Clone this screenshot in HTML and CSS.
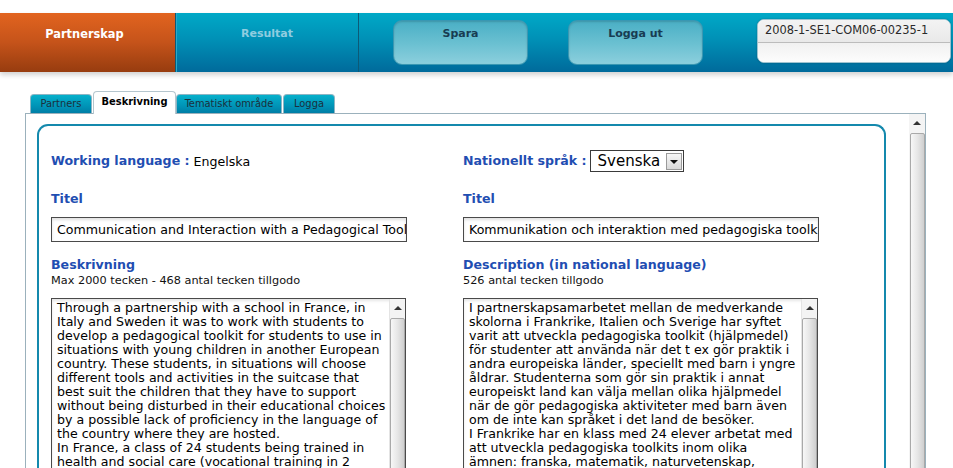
FILE: index.html
```html
<!DOCTYPE html>
<html lang="sv">
<head>
<meta charset="utf-8">
<title>Partnerskap - Beskrivning</title>
<link rel="stylesheet" href="styles.css">
</head>
<body>
<header class="topbar">
  <nav class="mainnav">
    <a class="nav-item nav-active">Partnerskap</a>
    <a class="nav-item nav-plain">Resultat</a>
  </nav>
  <div class="actions">
    <a class="pill">Spara</a>
    <a class="pill">Logga ut</a>
  </div>
  <div class="project-id">
    <div class="id-top">2008-1-SE1-COM06-00235-1</div>
    <div class="id-bottom"></div>
  </div>
</header>

<div class="tabs">
  <span class="tab tab-partners">Partners</span>
  <span class="tab tab-active">Beskrivning</span>
  <span class="tab tab-tema">Tematiskt område</span>
  <span class="tab tab-logga">Logga</span>
</div>

<section class="panel">
  <div class="panel-body">
    <div class="card">
      <div class="grid">
        <div class="field-row">
          <span class="label">Working language :</span>
          <span class="value">Engelska</span>
        </div>
        <div class="field-row">
          <span class="label">Nationellt språk :</span>
          <span class="select">
            <span class="select-text">Svenska</span>
            <span class="select-btn"><span class="tri-down"></span></span>
          </span>
        </div>

        <div class="field">
          <div class="label heading">Titel</div>
          <div class="input">Communication and Interaction with a Pedagogical Tool</div>
        </div>
        <div class="field">
          <div class="label heading">Titel</div>
          <div class="input">Kommunikation och interaktion med pedagogiska toolkit</div>
        </div>

        <div class="field">
          <div class="label heading sub">Beskrivning</div>
          <div class="hint">Max 2000 tecken - 468 antal tecken tillgodo</div>
          <div class="textarea">
            <div class="ta-text">Through a partnership with a school in France, in<br>Italy and Sweden it was to work with students to<br>develop a pedagogical toolkit for students to use in<br>situations with young children in another European<br>country. These students, in situations will choose<br>different tools and activities in the suitcase that<br>best suit the children that they have to support<br>without being disturbed in their educational choices<br>by a possible lack of proficiency in the language of<br>the country where they are hosted.<br>In France, a class of 24 students being trained in<br>health and social care (vocational training in 2<br>years) worked on developing pedagogical toolkits</div>
            <div class="vscroll"><span class="sb-up"><span class="tri-up"></span></span><span class="sb-thumb"></span></div>
          </div>
        </div>
        <div class="field">
          <div class="label heading sub">Description (in national language)</div>
          <div class="hint">526 antal tecken tillgodo</div>
          <div class="textarea">
            <div class="ta-text">I partnerskapsamarbetet mellan de medverkande<br>skolorna i Frankrike, Italien och Sverige har syftet<br>varit att utveckla pedagogiska toolkit (hjälpmedel)<br>för studenter att använda när det t ex gör praktik i<br>andra europeiska länder, speciellt med barn i yngre<br>åldrar. Studenterna som gör sin praktik i annat<br>europeiskt land kan välja mellan olika hjälpmedel<br>när de gör pedagogiska aktiviteter med barn även<br>om de inte kan språket i det land de besöker.<br>I Frankrike har en klass med 24 elever arbetat med<br>att utveckla pedagogiska toolkits inom olika<br>ämnen: franska, matematik, naturvetenskap,<br>historia och geografi.</div>
            <div class="vscroll"><span class="sb-up"><span class="tri-up"></span></span><span class="sb-thumb"></span></div>
          </div>
        </div>
      </div>
    </div>
  </div>
  <div class="vscroll page-scroll"><span class="sb-up"><span class="tri-up"></span></span><span class="sb-thumb"></span></div>
</section>
</body>
</html>
```
FILE: styles.css
```css
* { box-sizing: border-box; }
html, body { margin: 0; padding: 0; background: #fff; overflow: hidden; }
body {
  font-family: "DejaVu Sans", Verdana, sans-serif;
  font-size: 12.6px;
  color: #000;
  height: 468px;
}

/* ---------- top bar ---------- */
.topbar {
  margin-top: 13px;
  height: 59px;
  display: flex;
  background: linear-gradient(#00a9c7, #0090b6 45%, #006a9b);
  box-shadow: 0 3px 5px rgba(0, 0, 0, 0.18);
  position: relative;
}
.mainnav { display: flex; }
.nav-item {
  display: block;
  height: 59px;
  padding-top: 14px;
  text-align: center;
  font-size: 11px;
  font-weight: bold;
  line-height: 14px;
  border-right: 1px solid #0c5a77;
}
.nav-active {
  width: 176px;
  padding-right: 6px;
  font-size: 11.4px;
  color: #fff;
  background: linear-gradient(#e2641f, #c5531a 50%, #973c0f);
}
.nav-plain {
  width: 183px;
  color: #8fcde0;
  box-shadow: inset 1px 0 0 #2aa9c8;
}
.actions {
  display: flex;
  gap: 40px;
  margin-left: 34px;
  padding-top: 7px;
}
.pill {
  display: block;
  width: 135px;
  height: 45px;
  border: 1px solid #3a97b2;
  border-radius: 9px;
  background: linear-gradient(#4aafc5, #6cc1d2 55%, #8ccfdd);
  box-shadow: inset 0 1px 2px rgba(0, 0, 0, 0.15);
  font-size: 11px;
  font-weight: bold;
  line-height: 14px;
  color: #183c52;
  padding-top: 6px;
  text-align: center;
}
.project-id {
  margin: 6px 0 0 54px;
  width: 194px;
  height: 44px;
  border-radius: 7px;
  border: 1px solid #9ec3d0;
  background: #fff;
  overflow: hidden;
  box-shadow: 0 0 2px rgba(0, 0, 0, 0.25);
}
.id-top {
  height: 23px;
  padding: 2px 0 0 7px;
  font-size: 11.4px;
  line-height: 16px;
  color: #2a2a2a;
  background: linear-gradient(#f3f3f3, #e9e9e9);
  border-bottom: 1px solid #bcbcbc;
}
.id-bottom {
  height: 20px;
  background: linear-gradient(#f1f1f1, #fdfdfd);
}

/* ---------- tabs ---------- */
.tabs {
  display: flex;
  align-items: flex-end;
  margin: 19px 0 0 30px;
  height: 22px;
  position: relative;
  z-index: 1;
}
.tab {
  height: 19px;
  font-family: "DejaVu Sans Condensed", "DejaVu Sans", sans-serif;
  font-size: 11px;
  line-height: 18px;
  color: #1b2f3c;
  text-align: center;
  white-space: nowrap;
  background: linear-gradient(#06b0cb, #0094b7 60%, #007ea6);
  border: 1px solid #8cb5c4;
  border-bottom: none;
  border-radius: 4px 4px 0 0;
}
.tab-partners { width: 62px; margin-right: 1px; }
.tab-tema { width: 106px; margin-right: 1px; }
.tab-logga { width: 52px; }
.tab-active {
  width: 83px;
  height: 23px;
  margin-bottom: -1px;
  background: #fff;
  color: #000;
  font-weight: bold;
  line-height: 19px;
  border-color: #b5c6ce;
}

/* ---------- panel ---------- */
.panel {
  margin-left: 25px;
  width: 901px;
  height: 360px;
  border: 1px solid #9bb1bc;
  border-bottom: none;
  display: flex;
}
.panel-body {
  flex: 1;
  padding: 10px 0 0 11px;
}
.card {
  width: 849px;
  height: 400px;
  border: 2px solid #1489ad;
  border-bottom: none;
  border-radius: 11px 11px 0 0;
  padding: 24px 0 0 12px;
}
.grid {
  display: grid;
  grid-template-columns: 412px 400px;
  row-gap: 19px;
}
.field-row {
  display: flex;
  align-items: center;
  height: 22px;
}
.label {
  color: #1f4eb2;
  font-weight: bold;
  font-size: 12.6px;
  line-height: 16px;
}
.value { margin-left: 4px; }

.select {
  display: flex;
  margin-left: 3px;
  width: 94px;
  height: 22px;
  border: 1px solid #3a3a3a;
  background: #fff;
}
.select-text {
  flex: 1;
  font-size: 15px;
  line-height: 20px;
  padding-left: 7px;
}
.select-btn {
  width: 16px;
  height: 17px;
  margin: 2px 1px 0 0;
  border: 1px solid #9a9a9a;
  background: linear-gradient(#f6f6f6, #d9d9d9);
  display: flex;
  align-items: center;
  justify-content: center;
}
.tri-down {
  width: 0; height: 0;
  border-left: 4px solid transparent;
  border-right: 4px solid transparent;
  border-top: 4px solid #111;
}

.field { display: flex; flex-direction: column; }
.heading { margin-bottom: 10px; }
.heading.sub { margin-bottom: 1px; margin-top: -4px; }
.input {
  width: 356px;
  height: 25px;
  border: 1px solid #4a4a4a;
  box-shadow: inset 0 2px 3px rgba(0, 0, 0, 0.12);
  padding: 4px 0 0 5px;
  line-height: 16px;
  white-space: nowrap;
  overflow: hidden;
}
.hint {
  font-size: 11.3px;
  line-height: 14px;
  color: #111;
  margin-bottom: 10px;
}
.textarea {
  display: flex;
  width: 355px;
  height: 200px;
  border: 1px solid #4a4a4a;
  box-shadow: inset 0 2px 3px rgba(0, 0, 0, 0.1);
}
.ta-text {
  flex: 1;
  padding: 2px 0 0 5px;
  line-height: 14px;
  white-space: nowrap;
  overflow: hidden;
}

/* ---------- scrollbars ---------- */
.vscroll {
  width: 16px;
  display: flex;
  flex-direction: column;
  align-items: center;
  background: #f3f3f3;
  border-left: 1px solid #e4e4e4;
}
.sb-up {
  width: 15px;
  height: 17px;
  display: flex;
  align-items: center;
  justify-content: center;
}
.tri-up {
  width: 0; height: 0;
  border-left: 4px solid transparent;
  border-right: 4px solid transparent;
  border-bottom: 4px solid #333;
}
.sb-thumb {
  flex: 1;
  width: 15px;
  margin-top: 2px;
  border: 1px solid #a9a9a9;
  border-radius: 2px;
  background: linear-gradient(to right, #f7f7f7, #e6e6e6 50%, #cfcfcf);
}
.page-scroll {
  width: 16px;
  background: #f4f4f4;
  border-left: none;
}
```
